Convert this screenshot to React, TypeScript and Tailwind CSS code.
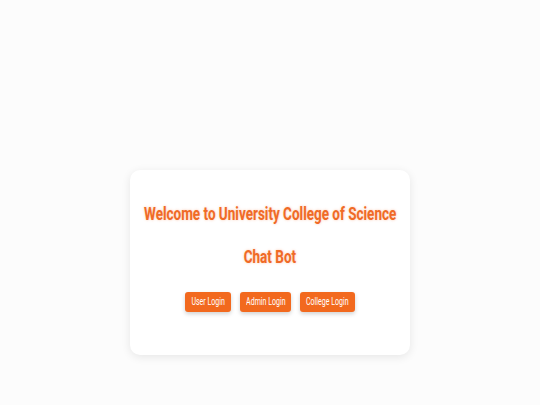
import React from 'react';

const buttons = [
  { label: 'User Login', width: 'w-[46px]' },
  { label: 'Admin Login', width: 'w-[51px]' },
  { label: 'College Login', width: 'w-[55px]' },
];

export default function App() {
  return (
    <div className="min-h-[405px] bg-[#fcfcfc] pt-[170px] font-['Roboto',sans-serif]">
      <div className="mx-auto flex h-[185px] w-[280px] flex-col items-center rounded-[10px] bg-white pt-[35px] shadow-[0_2px_10px_rgba(0,0,0,0.09)]">
        <h1 className="flex h-[18px] items-center justify-center whitespace-nowrap text-[18px] font-bold leading-[18px] text-[#f06a26] [text-shadow:0_0_3px_rgba(240,106,36,0.4)]">
          <span className="inline-block scale-x-[0.75]">Welcome to University College of Science</span>
        </h1>
        <h2 className="mt-[25px] flex h-[18px] items-center justify-center whitespace-nowrap text-[18px] font-bold leading-[18px] text-[#f06a26] [text-shadow:0_0_3px_rgba(240,106,36,0.4)]">
          <span className="inline-block scale-x-[0.75]">Chat Bot</span>
        </h2>
        <div className="mt-[26px] flex gap-[9px]">
          {buttons.map((b) => (
            <button
              key={b.label}
              className={`${b.width} flex h-[20px] items-center justify-center whitespace-nowrap rounded-[3px] bg-[#f2691e] text-[11px] text-white shadow-[0_2px_4px_rgba(0,0,0,0.18)]`}
            >
              <span className="inline-block scale-x-[0.64]">{b.label}</span>
            </button>
          ))}
        </div>
      </div>
    </div>
  );
}
